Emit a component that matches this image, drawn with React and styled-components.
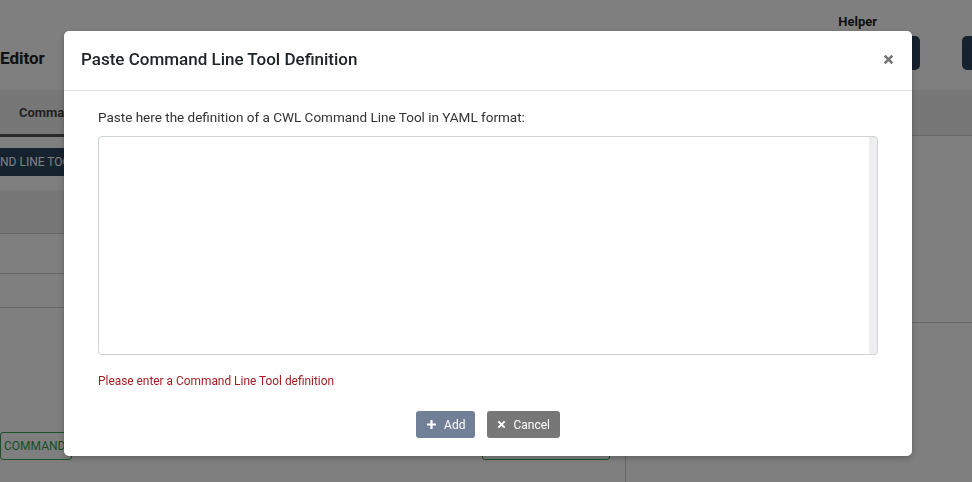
import React from "react";
import styled, { createGlobalStyle } from "styled-components";

const GlobalStyle = createGlobalStyle`
  html, body {
    margin: 0;
    padding: 0;
    height: 100%;
    overflow: hidden;
    font-family: Roboto, "Liberation Sans", sans-serif;
    color: #212529;
    background: #fff;
  }
`;

const Page = styled.div`
  width: 972px;
  height: 482px;
  display: flex;
  flex-direction: column;
  overflow: hidden;
`;

const Header = styled.div`
  height: 90px;
  display: flex;
  align-items: center;
  justify-content: space-between;
  box-sizing: border-box;
`;

const Title = styled.div`
  font-size: 17px;
  font-weight: 700;
  color: #222;
  margin-top: 26px;
`;

const HeaderRight = styled.div`
  display: flex;
  flex-direction: column;
  align-items: flex-end;
  gap: 7px;
  align-self: flex-start;
  padding-top: 14px;
`;

const HelperLabel = styled.div`
  font-size: 13px;
  font-weight: 700;
  color: #222;
  margin-right: 95px;
`;

const HeaderButtons = styled.div`
  display: flex;
  gap: 42px;
  margin-right: -20px;
`;

const DarkBlock = styled.div`
  width: ${(p) => p.w}px;
  height: 34px;
  background: #2e445e;
  border-radius: 5px;
`;

const TabBar = styled.div`
  height: 45px;
  background: #eee;
  border-bottom: 1px solid #ccc;
  display: flex;
`;

const Tab = styled.div`
  width: 300px;
  box-sizing: border-box;
  padding-left: 19px;
  display: flex;
  align-items: center;
  font-size: 13px;
  font-weight: 700;
  color: #444;
  border-bottom: 3px solid #555;
  margin-bottom: -2px;
`;

const Content = styled.div`
  flex: 1;
  display: flex;
`;

const LeftPanel = styled.div`
  width: 625px;
  border-right: 1px solid #ccc;
  display: flex;
  flex-direction: column;
  padding-top: 12px;
`;

const NavyButton = styled.div`
  width: 120px;
  height: 28px;
  background: #2e445e;
  color: #fff;
  font-size: 12px;
  display: flex;
  align-items: center;
  white-space: nowrap;
  overflow: hidden;
  border-radius: 0 4px 4px 0;
`;

const TableHead = styled.div`
  height: 43px;
  margin-top: 14px;
  background: #eee;
  border-bottom: 1px solid #ccc;
`;

const TableRow = styled.div`
  height: ${(p) => p.h}px;
  border-bottom: 1px solid #ccc;
`;

const BottomBar = styled.div`
  margin-top: auto;
  margin-bottom: 22px;
  display: flex;
  align-items: flex-end;
  justify-content: space-between;
  padding-right: 15px;
`;

const OutlineButton = styled.div`
  width: ${(p) => p.w}px;
  height: 28px;
  box-sizing: border-box;
  border: 1px solid #3c9d55;
  border-radius: 3px;
  color: #2f9e4c;
  font-size: 12px;
  display: flex;
  align-items: center;
  padding-left: 3px;
  white-space: nowrap;
  overflow: hidden;
`;

const RightPanel = styled.div`
  flex: 1;
  display: flex;
  flex-direction: column;
`;

const RightBlock = styled.div`
  height: 186px;
  border-bottom: 1px solid #ccc;
`;

const Overlay = styled.div`
  position: fixed;
  inset: 0;
  background: rgba(0, 0, 0, 0.5);
`;

const Modal = styled.div`
  position: fixed;
  left: 64px;
  top: 31px;
  width: 848px;
  height: 425px;
  background: #fff;
  border-radius: 5px;
  box-shadow: 0 2px 6px rgba(0, 0, 0, 0.25);
  display: flex;
  flex-direction: column;
`;

const ModalHeader = styled.div`
  height: 60px;
  box-sizing: border-box;
  border-bottom: 1px solid #dee2e6;
  display: flex;
  align-items: center;
  justify-content: space-between;
  padding: 0 16px 3px 17px;
`;

const ModalTitle = styled.h5`
  margin: 0;
  font-size: 17px;
  font-weight: 500;
  color: #212529;
`;

const CloseButton = styled.button`
  border: none;
  background: none;
  padding: 0;
  width: 16px;
  height: 16px;
  display: flex;
  align-items: center;
  justify-content: center;
  cursor: pointer;
`;

const ModalBody = styled.div`
  padding: 18px 34px 0 34px;
  display: flex;
  flex-direction: column;
`;

const Label = styled.label`
  font-size: 13.5px;
  color: #333;
  line-height: 17px;
  margin-bottom: 10px;
`;

const TextArea = styled.textarea`
  width: 780px;
  height: 219px;
  box-sizing: border-box;
  border: 1px solid #ced4da;
  border-radius: 4px;
  resize: none;
  overflow-y: hidden;
  font-family: inherit;
  outline: none;
  background: linear-gradient(to left, #eee 0, #eee 8px, #fff 8px);
`;

const ErrorText = styled.div`
  margin-top: 19px;
  font-size: 11.9px;
  color: #a61c25;
`;

const Footer = styled.div`
  display: flex;
  justify-content: center;
  gap: 12px;
  margin-top: 23px;
`;

const ActionButton = styled.button`
  height: 27px;
  box-sizing: border-box;
  border: none;
  border-radius: 3px;
  background: ${(p) => p.bg};
  color: #fff;
  font-family: inherit;
  font-size: 12px;
  display: flex;
  align-items: center;
  gap: 7px;
  padding: 0 10px;
`;

function PlusIcon() {
  return (
    <svg width="11" height="11" viewBox="0 0 11 11">
      <path d="M5.5 1v9M1 5.5h9" stroke="#fff" strokeWidth="2.2" />
    </svg>
  );
}

function XIcon({ color = "#fff", size = 9, width = 2.2 }) {
  return (
    <svg width={size} height={size} viewBox="0 0 10 10">
      <path d="M1.5 1.5l7 7M8.5 1.5l-7 7" stroke={color} strokeWidth={width} />
    </svg>
  );
}

export default function App() {
  return (
    <>
      <GlobalStyle />
      <Page>
        <Header>
          <Title>Editor</Title>
          <HeaderRight>
            <HelperLabel>Helper</HelperLabel>
            <HeaderButtons>
              <DarkBlock w={100} />
              <DarkBlock w={30} />
            </HeaderButtons>
          </HeaderRight>
        </Header>
        <TabBar>
          <Tab>Command Line Tool</Tab>
        </TabBar>
        <Content>
          <LeftPanel>
            <NavyButton>ND LINE TOOL</NavyButton>
            <TableHead />
            <TableRow h={39} />
            <TableRow h={33} />
            <BottomBar>
              <OutlineButton w={72}>COMMAND LINE TOOL</OutlineButton>
              <OutlineButton w={128} />
            </BottomBar>
          </LeftPanel>
          <RightPanel>
            <RightBlock />
          </RightPanel>
        </Content>
      </Page>
      <Overlay />
      <Modal>
        <ModalHeader>
          <ModalTitle>Paste Command Line Tool Definition</ModalTitle>
          <CloseButton aria-label="Close">
            <XIcon color="#777" size={11} width={2.4} />
          </CloseButton>
        </ModalHeader>
        <ModalBody>
          <Label>Paste here the definition of a CWL Command Line Tool in YAML format:</Label>
          <TextArea />
          <ErrorText>Please enter a Command Line Tool definition</ErrorText>
          <Footer>
            <ActionButton bg="#718096">
              <PlusIcon />
              Add
            </ActionButton>
            <ActionButton bg="#777">
              <XIcon />
              Cancel
            </ActionButton>
          </Footer>
        </ModalBody>
      </Modal>
    </>
  );
}
